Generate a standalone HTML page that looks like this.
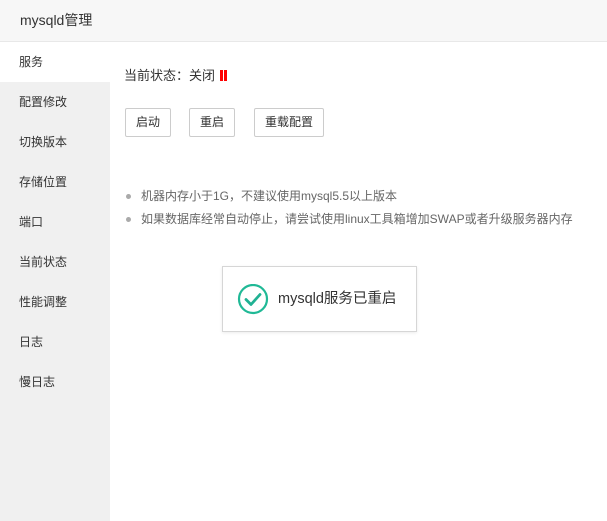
<!DOCTYPE html>
<html><head><meta charset="utf-8"><style>
*{margin:0;padding:0;box-sizing:border-box}
body{width:607px;height:521px;overflow:hidden;background:#fff;font-family:"Liberation Sans","Noto Sans CJK SC",sans-serif;color:#333;position:relative}
.hd{position:absolute;left:0;top:0;width:607px;height:42px;background:#f7f7f7;border-bottom:1px solid #e8e8e8;font-size:14px;line-height:41px;padding-left:20px;color:#333}
.sb{position:absolute;left:0;top:42px;width:110px;height:479px;background:#f0f0f0}
.sb div{height:40px;line-height:40px;padding-left:19px;font-size:12px;color:#333}
.sb .on{background:#fff}
.st{position:absolute;left:124px;top:67px;font-size:13px;line-height:18px}
.st i{display:inline-block;width:3px;height:11px;background:#f00;margin-left:1px;vertical-align:-1px}
.btn{position:absolute;top:108px;height:29px;border:1px solid #ccc;border-radius:2px;font-size:12px;line-height:27px;text-align:center;background:#fff}
ul{position:absolute;left:124px;top:186px;font-size:12px;color:#666;list-style:none}
li{height:23px;line-height:20px;padding-left:17px;position:relative}
li:before{content:"";position:absolute;left:2px;top:8px;width:5px;height:5px;border-radius:50%;background:#aaa}
.tt{position:absolute;left:222px;top:266px;width:195px;height:66px;border:1px solid #d6d6d6;background:#fff;box-shadow:0 1px 3px rgba(0,0,0,.08)}
.tt svg{position:absolute;left:14px;top:17px}
.tt span{position:absolute;left:55px;top:22px;font-size:14.5px;line-height:20px;color:#333}
</style></head><body>
<div class="hd">mysqld管理</div>
<div class="sb">
<div class="on">服务</div><div>配置修改</div><div>切换版本</div><div>存储位置</div><div>端口</div><div>当前状态</div><div>性能调整</div><div>日志</div><div>慢日志</div>
</div>
<div class="st">当前状态：关闭 <i></i><i></i></div>
<div class="btn" style="left:125px;width:46px">启动</div>
<div class="btn" style="left:189px;width:46px">重启</div>
<div class="btn" style="left:254px;width:70px">重载配置</div>
<ul><li>机器内存小于1G，不建议使用mysql5.5以上版本</li><li>如果数据库经常自动停止，请尝试使用linux工具箱增加SWAP或者升级服务器内存</li></ul>
<div class="tt"><svg width="32" height="32" viewBox="0 0 32 32"><circle cx="16" cy="15" r="14" fill="none" stroke="#20b996" stroke-width="2.2"/><path d="M9 15.5 L14 20.5 L23 10.5" fill="none" stroke="#20b193" stroke-width="2.8" stroke-linecap="round" stroke-linejoin="round"/></svg><span>mysqld服务已重启</span></div>
</body></html>
